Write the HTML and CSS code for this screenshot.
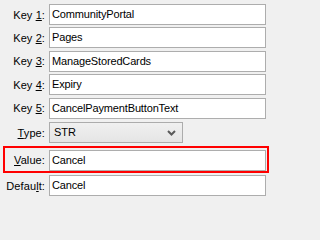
FILE: index.html
```html
<!DOCTYPE html>
<html>
<head>
<meta charset="utf-8">
<link rel="stylesheet" href="styles.css">
</head>
<body>
<div class="form">
  <div class="row"><label class="lbl">Key <u>1</u>:</label><div class="field">CommunityPortal</div></div>
  <div class="row"><label class="lbl">Key <u>2</u>:</label><div class="field">Pages</div></div>
  <div class="row"><label class="lbl">Key <u>3</u>:</label><div class="field">ManageStoredCards</div></div>
  <div class="row"><label class="lbl">Key <u>4</u>:</label><div class="field">Expiry</div></div>
  <div class="row"><label class="lbl">Key <u>5</u>:</label><div class="field">CancelPaymentButtonText</div></div>
  <div class="row sel-row"><label class="lbl"><u>T</u>ype:</label>
    <div class="select"><span>STR</span>
      <svg class="chev" width="9" height="6" viewBox="0 0 9 6"><path d="M1 1 L4.5 4.5 L8 1" fill="none" stroke="#5a5a5a" stroke-width="2"/></svg>
    </div>
  </div>
  <div class="row hl"><label class="lbl"><u>V</u>alue:</label><div class="field">Cancel</div></div>
  <div class="row"><label class="lbl">Defau<u>l</u>t:</label><div class="field">Cancel</div></div>
</div>
</body>
</html>
```
FILE: styles.css
```css
html, body { margin: 0; padding: 0; background: #f0f0f0; }
body { width: 271px; height: 201px; overflow: hidden; font-family: "Liberation Sans", Arial, sans-serif; font-size: 11px; color: #000; }
.form { display: flex; flex-direction: column; gap: 2.4px; padding: 4px 5px 0 0; }
.row { display: flex; align-items: center; height: 21px; }
.lbl { width: 45px; margin-right: 4px; text-align: right; flex: none; white-space: nowrap; letter-spacing: 0.1px; }
.lbl u { text-decoration-thickness: 1px; text-underline-offset: 1px; }
.field { flex: 1; height: 21px; box-sizing: border-box; border: 1px solid #adadad; background: #fff; padding: 0 2px; line-height: 19px; white-space: nowrap; overflow: hidden; letter-spacing: -0.15px; }
.sel-row { margin-top: 1.5px; }
.select { width: 134px; height: 21px; box-sizing: border-box; border: 1px solid #acacac; background: linear-gradient(#f0f0f0, #e5e5e5); padding: 0 4px 0 4px; display: flex; align-items: center; justify-content: space-between; line-height: 19px; }
.chev { margin-right: 2px; }
.hl { height: auto; border: 2px solid #ff0000; margin: 0 -3px 0 3px; padding: 2px 1px 0 0; }
.hl .lbl { width: 40px; }
```
